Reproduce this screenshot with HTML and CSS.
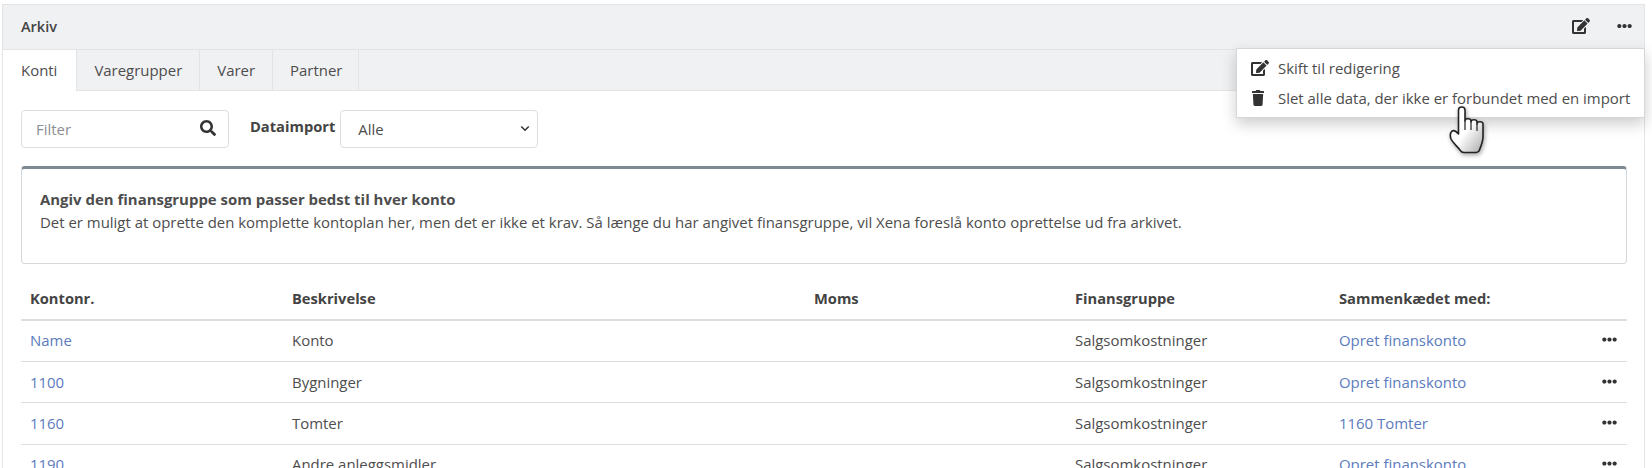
FILE: index.html
```html
<!DOCTYPE html>
<html lang="da">
<head>
    <meta charset="UTF-8">
    <title>Arkiv</title>
    <link rel="stylesheet" href="styles.css">
</head>
<body>
    <div class="card">
        <div class="card-head">
            <span class="card-title">Arkiv</span>
            <div class="head-actions">
                <svg class="icon-edit" viewBox="0 0 576 512"><path d="M402.6 83.2l90.2 90.2c3.8 3.8 3.8 10 0 13.8L274.4 405.6l-92.8 10.3c-12.4 1.4-22.9-9.1-21.5-21.5l10.3-92.8L388.8 83.2c3.8-3.8 10-3.8 13.8 0zm162-22.9l-48.8-48.8c-15.2-15.2-39.9-15.2-55.2 0l-35.4 35.4c-3.8 3.8-3.8 10 0 13.8l90.2 90.2c3.8 3.8 10 3.8 13.8 0l35.4-35.4c15.2-15.3 15.2-40 0-55.2zM384 346.2V448H64V128h229.8c3.2 0 6.2-1.3 8.5-3.5l40-40c7.6-7.6 2.2-20.5-8.5-20.5H48C21.5 64 0 85.5 0 112v352c0 26.5 21.5 48 48 48h352c26.5 0 48-21.5 48-48V306.2c0-10.7-12.9-16-20.5-8.5l-40 40c-2.2 2.3-3.5 5.3-3.5 8.5z"/></svg>
                <svg class="icon-dots" viewBox="0 0 512 512"><path d="M328 256c0 39.8-32.2 72-72 72s-72-32.2-72-72 32.2-72 72-72 72 32.2 72 72zm104-72c-39.8 0-72 32.2-72 72s32.2 72 72 72 72-32.2 72-72-32.2-72-72-72zm-352 0c-39.8 0-72 32.2-72 72s32.2 72 72 72 72-32.2 72-72-32.2-72-72-72z"/></svg>
            </div>
        </div>

        <div class="tabs">
            <a class="tab active">Konti</a>
            <a class="tab">Varegrupper</a>
            <a class="tab">Varer</a>
            <a class="tab">Partner</a>
        </div>

        <div class="card-body">
            <div class="filters">
                <div class="filter-input">
                    <span class="placeholder">Filter</span>
                    <svg class="icon-search" viewBox="0 0 512 512"><path d="M505 442.7L405.3 343c-4.5-4.5-10.6-7-17-7H372c27.6-35.3 44-79.7 44-128C416 93.1 322.9 0 208 0S0 93.1 0 208s93.1 208 208 208c48.3 0 92.7-16.4 128-44v16.3c0 6.4 2.5 12.5 7 17l99.7 99.7c9.4 9.4 24.6 9.4 33.9 0l28.3-28.3c9.4-9.4 9.4-24.6.1-34zM208 336c-70.7 0-128-57.2-128-128 0-70.7 57.2-128 128-128 70.7 0 128 57.2 128 128 0 70.7-57.2 128-128 128z"/></svg>
                </div>
                <label class="filter-label">Dataimport</label>
                <div class="filter-select">
                    <span>Alle</span>
                    <svg class="icon-chevron" viewBox="0 0 12 8"><path d="M1.5 1.5 6 6l4.5-4.5" fill="none" stroke="#333" stroke-width="1.8"/></svg>
                </div>
            </div>

            <div class="notice">
                <strong>Angiv den finansgruppe som passer bedst til hver konto</strong>
                <p>Det er muligt at oprette den komplette kontoplan her, men det er ikke et krav. Så længe du har angivet finansgruppe, vil Xena foreslå konto oprettelse ud fra arkivet.</p>
            </div>

            <table class="accounts">
                <thead>
                    <tr>
                        <th class="col-no">Kontonr.</th>
                        <th class="col-desc">Beskrivelse</th>
                        <th class="col-vat">Moms</th>
                        <th class="col-group">Finansgruppe</th>
                        <th class="col-link">Sammenkædet med:</th>
                        <th class="col-more"></th>
                    </tr>
                </thead>
                <tbody>
                    <tr>
                        <td><a>Name</a></td><td>Konto</td><td></td><td>Salgsomkostninger</td><td><a>Opret finanskonto</a></td>
                        <td class="more"><svg class="icon-dots" viewBox="0 0 512 512"><use href="#dots"/></svg></td>
                    </tr>
                    <tr>
                        <td><a>1100</a></td><td>Bygninger</td><td></td><td>Salgsomkostninger</td><td><a>Opret finanskonto</a></td>
                        <td class="more"><svg class="icon-dots" viewBox="0 0 512 512"><use href="#dots"/></svg></td>
                    </tr>
                    <tr>
                        <td><a>1160</a></td><td>Tomter</td><td></td><td>Salgsomkostninger</td><td><a>1160 Tomter</a></td>
                        <td class="more"><svg class="icon-dots" viewBox="0 0 512 512"><use href="#dots"/></svg></td>
                    </tr>
                    <tr>
                        <td><a>1190</a></td><td>Andre anleggsmidler</td><td></td><td>Salgsomkostninger</td><td><a>Opret finanskonto</a></td>
                        <td class="more"><svg class="icon-dots" viewBox="0 0 512 512"><use href="#dots"/></svg></td>
                    </tr>
                </tbody>
            </table>
        </div>
    </div>

    <div class="menu">
        <a class="menu-item">
            <svg class="icon-edit" viewBox="0 0 576 512"><path d="M402.6 83.2l90.2 90.2c3.8 3.8 3.8 10 0 13.8L274.4 405.6l-92.8 10.3c-12.4 1.4-22.9-9.1-21.5-21.5l10.3-92.8L388.8 83.2c3.8-3.8 10-3.8 13.8 0zm162-22.9l-48.8-48.8c-15.2-15.2-39.9-15.2-55.2 0l-35.4 35.4c-3.8 3.8-3.8 10 0 13.8l90.2 90.2c3.8 3.8 10 3.8 13.8 0l35.4-35.4c15.2-15.3 15.2-40 0-55.2zM384 346.2V448H64V128h229.8c3.2 0 6.2-1.3 8.5-3.5l40-40c7.6-7.6 2.2-20.5-8.5-20.5H48C21.5 64 0 85.5 0 112v352c0 26.5 21.5 48 48 48h352c26.5 0 48-21.5 48-48V306.2c0-10.7-12.9-16-20.5-8.5l-40 40c-2.2 2.3-3.5 5.3-3.5 8.5z"/></svg>
            Skift til redigering
        </a>
        <a class="menu-item">
            <svg class="icon-trash" viewBox="0 0 448 512" preserveAspectRatio="none"><path d="M432 32H312l-9.4-18.7A24 24 0 0 0 281.1 0H166.8a23.72 23.72 0 0 0-21.4 13.3L136 32H16A16 16 0 0 0 0 48v32a16 16 0 0 0 16 16h416a16 16 0 0 0 16-16V48a16 16 0 0 0-16-16zM53.2 467a48 48 0 0 0 47.9 45h245.8a48 48 0 0 0 47.9-45L416 128H32z"/></svg>
            Slet alle data, der ikke er forbundet med en import
        </a>
    </div>

    <svg class="hand" viewBox="0 0 34 48">
        <defs>
            <linearGradient id="hand-fill" x1="0" y1="0" x2="1" y2="1">
                <stop offset="0.5" stop-color="#fff"/>
                <stop offset="1" stop-color="#aaa"/>
            </linearGradient>
            <path id="dots" d="M328 256c0 39.8-32.2 72-72 72s-72-32.2-72-72 32.2-72 72-72 72 32.2 72 72zm104-72c-39.8 0-72 32.2-72 72s32.2 72 72 72 72-32.2 72-72-32.2-72-72-72zm-352 0c-39.8 0-72 32.2-72 72s32.2 72 72 72 72-32.2 72-72-32.2-72-72-72z"/>
        </defs>
        <path d="M8.5 4c0-4 6.5-4 6.5 0v11c0-3 6-3 6 0v1c0-3 6-3 6 0v2c0-3 6-3 6 0v13c0 5-2 9-4 14-1 1-2 1.500-3 1.500H14c-3 0-3-1-4-2.500-3-4-7-7-9-11-1-3-1-6 1-8 2-1 4 0 6.500 3z" fill="url(#hand-fill)" stroke="#222" stroke-width="1.6" stroke-linejoin="round"/>
        <path d="M15 15v9M21 16v8M27 18v7" fill="none" stroke="#222" stroke-width="1.2"/>
    </svg>
</body>
</html>
```

FILE: styles.css
```css
html, body {
    margin: 0;
    height: 468px;
    overflow: hidden;
}
body {
    padding: 4px 7px 0 2px;
    box-sizing: border-box;
    background: #fff;
    color: #4d4d4d;
    font-family: "Open Sans", sans-serif;
    font-size: 14.95px;
    line-height: 23px;
    position: relative;
}
a {
    color: #5b7bbd;
    text-decoration: none;
}
svg {
    display: block;
    fill: #333;
}

.card {
    border: 1px solid #e2e4e6;
    border-bottom: 0;
}
.card-head {
    height: 45px;
    box-sizing: border-box;
    padding: 0 12px 2px 18px;
    background: #f0f1f3;
    border-bottom: 1px solid #e2e4e6;
    display: flex;
    align-items: center;
    justify-content: space-between;
}
.card-title {
    color: #444;
    font-weight: 600;
    font-size: 14.5px;
}
.head-actions {
    display: flex;
    align-items: center;
    gap: 27px;
}
.icon-edit {
    width: 18px;
    height: 16px;
}
.icon-dots {
    width: 15px;
    height: 16px;
}

.tabs {
    display: flex;
    height: 41px;
    box-sizing: border-box;
    background: #f0f1f3;
    border-bottom: 1px solid #e2e4e6;
}
.tab {
    padding: 0 17px;
    line-height: 40px;
    color: #4d4d4d;
    border-right: 1px solid #e2e4e6;
}
.tab:last-child {
    padding-right: 16px;
}
.tab.active {
    background: #fff;
    height: 41px;
    padding: 0 19px 0 18px;
}

.card-body {
    padding: 19px 17px 0 18px;
}
.filters {
    display: flex;
    align-items: flex-start;
    height: 38px;
}
.filter-input {
    width: 208px;
    height: 38px;
    box-sizing: border-box;
    padding: 0 12px 0 14px;
    border: 1px solid #dcdfe2;
    border-radius: 4px;
    display: flex;
    align-items: center;
    justify-content: space-between;
}
.placeholder {
    color: #8b8f93;
}
.icon-search {
    width: 16px;
    height: 16px;
    margin-top: -3px;
}
.filter-label {
    margin: 5px 5px 0 21px;
    font-weight: 700;
    font-size: 14.7px;
    color: #444;
}
.filter-select {
    width: 198px;
    height: 38px;
    box-sizing: border-box;
    padding: 0 7px 0 17px;
    border: 1px solid #dcdfe2;
    border-radius: 4px;
    display: flex;
    align-items: center;
    justify-content: space-between;
}
.icon-chevron {
    width: 10px;
    height: 7px;
    margin-top: -1px;
}

.notice {
    margin-top: 18px;
    height: 98px;
    box-sizing: border-box;
    padding: 19px 18px 0;
    border: 1px solid #d5d8da;
    border-top: 3px solid #7c8a95;
    border-radius: 4px;
    line-height: 22.5px;
}
.notice p {
    margin: 0;
}

.accounts {
    width: 1606px;
    margin-top: 14px;
    border-collapse: collapse;
    table-layout: fixed;
}
.accounts th,
.accounts td {
    box-sizing: border-box;
    padding: 0 10px;
}
.accounts th:first-child,
.accounts td:first-child {
    padding-left: 9px;
}
.accounts th {
    height: 42px;
    padding-bottom: 1px;
    text-align: left;
    font-weight: 700;
    font-size: 14.7px;
    color: #444;
    border-bottom: 2px solid #dcdddf;
}
.accounts td {
    height: 41.4px;
    border-bottom: 1px solid #dcdddf;
}
.col-no { width: 261px; }
.col-desc { width: 522px; }
.col-vat { width: 261px; }
.col-group { width: 264px; }
.col-more { width: 48px; }
.more .icon-dots {
    width: 15px;
    height: 15px;
    margin-left: auto;
    margin-top: -2px;
}

.menu {
    position: absolute;
    top: 48px;
    left: 1236px;
    width: 409px;
    height: 70px;
    padding: 4px 0 0 14px;
    box-sizing: border-box;
    background: #fff;
    border: 1px solid #d4d6d8;
    box-shadow: 0 6px 14px rgba(0, 0, 0, 0.2);
}
.menu-item {
    display: flex;
    align-items: center;
    height: 30px;
    gap: 9px;
    color: #4d4d4d;
    white-space: nowrap;
}
.icon-trash {
    width: 12px;
    height: 16px;
    margin: 0 5px 0 1px;
}

.hand {
    position: absolute;
    top: 106px;
    left: 1450px;
    width: 34px;
    height: 48px;
    overflow: visible;
    filter: drop-shadow(1px 2px 2px rgba(0, 0, 0, 0.35));
}
```
